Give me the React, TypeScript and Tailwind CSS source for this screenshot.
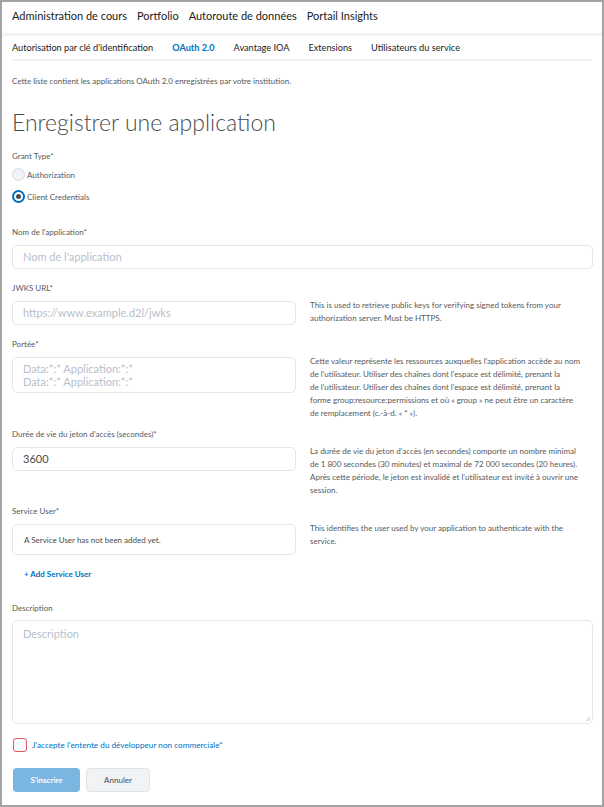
import React from 'react';

const font = { fontFamily: 'Lato, "Open Sans", sans-serif' };

const Label: React.FC<{ children: React.ReactNode; className?: string }> = ({ children, className = '' }) => (
  <div className={`text-[8px] leading-[12px] text-[#565a5c] ${className}`}>{children}</div>
);

// help text beside a field, one entry per rendered line
const Help: React.FC<{ lines: string[] }> = ({ lines }) => (
  <div className="-mt-[2px] whitespace-nowrap text-[8px] leading-[13px] text-[#565a5c]">
    {lines.map((l, i) => (
      <div key={i}>{l}</div>
    ))}
  </div>
);

const inputBox = 'rounded-[5px] border border-[#dfe6ef] bg-white';

export default function App() {
  const tabs = ["Autorisation par clé d'identification", 'OAuth 2.0', 'Avantage IOA', 'Extensions', 'Utilisateurs du service'];

  return (
    <div style={font} className="box-border h-[807px] w-[604px] overflow-hidden border-2 border-[#a3a3a3] bg-white">
      {/* top navigation */}
      <div className="flex h-[31px] items-center gap-[10px] pb-[3px] pl-[10px] text-[11px] text-[#202122]">
        <span>Administration de cours</span>
        <span>Portfolio</span>
        <span>Autoroute de données</span>
        <span>Portail Insights</span>
      </div>
      <div className="h-[3px] bg-[#f3f4f6]" />

      <div className="px-[10px]">
        {/* sub tabs */}
        <div className="flex h-[25px] items-center gap-[19px] border-b-2 border-[#eef1f5] text-[9.2px] text-[#202122]">
          {tabs.map((t) => (
            <span key={t} className={t === 'OAuth 2.0' ? 'font-bold text-[#006fbf]' : ''}>
              {t}
            </span>
          ))}
        </div>

        <p className="mt-[14px] text-[8px] leading-[12px] text-[#565a5c]">
          Cette liste contient les applications OAuth 2.0 enregistrées par votre institution.
        </p>

        <h1 className="mt-[21px] text-[23px] font-light leading-[28px] text-[#494c4e]">Enregistrer une application</h1>

        {/* grant type */}
        <Label className="mt-[14px]">Grant Type*</Label>
        <div className="mt-[6px] flex h-[13px] items-center gap-[2px]">
          <span className="h-[13px] w-[13px] rounded-full border border-[#d3d9e3] bg-[#f1f3f6]" />
          <span className="text-[8px] leading-[12px] text-[#565a5c]">Authorization</span>
        </div>
        <div className="mt-[9px] flex h-[13px] items-center gap-[2px]">
          <span className="flex h-[13px] w-[13px] items-center justify-center rounded-full border-2 border-[#006fbf] bg-white">
            <span className="h-[5px] w-[5px] rounded-full bg-[#494c4e]" />
          </span>
          <span className="text-[8px] leading-[12px] text-[#565a5c]">Client Credentials</span>
        </div>

        {/* name */}
        <Label className="mt-[23px]">Nom de l'application*</Label>
        <div className={`mt-[7px] flex h-[24px] w-[581px] items-center px-[10px] text-[11px] text-[#b8c0ca] ${inputBox}`}>
          Nom de l'application
        </div>

        {/* jwks */}
        <Label className="mt-[13px]">JWKS URL*</Label>
        <div className="mt-[7px] flex items-start gap-[14px]">
          <div className={`flex h-[24px] w-[284px] shrink-0 items-center px-[10px] text-[11px] text-[#b8c0ca] ${inputBox}`}>
            https://www.example.d2l/jwks
          </div>
          <Help
            lines={[
              'This is used to retrieve public keys for verifying signed tokens from your',
              'authorization server. Must be HTTPS.',
            ]}
          />
        </div>

        {/* scope */}
        <Label className="mt-[13px]">Portée*</Label>
        <div className="mt-[7px] flex items-start gap-[14px]">
          <div className={`flex h-[36px] w-[284px] shrink-0 flex-col justify-center px-[10px] text-[11px] leading-[13px] text-[#b8c0ca] ${inputBox}`}>
            <span>Data:*:* Application:*:*</span>
            <span>Data:*:* Application:*:*</span>
          </div>
          <Help
            lines={[
              "Cette valeur représente les ressources auxquelles l'application accède au nom",
              "de l'utilisateur. Utiliser des chaînes dont l'espace est délimité, prenant la",
              "de l'utilisateur. Utiliser des chaînes dont l'espace est délimité, prenant la",
              'forme group:resource:permissions et où « group » ne peut être un caractère',
              'de remplacement (c.-à-d. « * »).',
            ]}
          />
        </div>

        {/* token lifetime */}
        <Label className="mt-[8px]">Durée de vie du jeton d'accès (secondes)*</Label>
        <div className="mt-[7px] flex items-start gap-[14px]">
          <div className={`flex h-[24px] w-[284px] shrink-0 items-center px-[10px] text-[11px] text-[#494c4e] ${inputBox}`}>
            3600
          </div>
          <Help
            lines={[
              "La durée de vie du jeton d'accès (en secondes) comporte un nombre minimal",
              'de 1 800 secondes (30 minutes) et maximal de 72 000 secondes (20 heures).',
              "Après cette période, le jeton est invalidé et l'utilisateur est invité à ouvrir une",
              'session.',
            ]}
          />
        </div>

        {/* service user */}
        <Label className="mt-[8px]">Service User*</Label>
        <div className="mt-[7px] flex items-start gap-[14px]">
          <div className={`flex h-[31px] w-[284px] shrink-0 items-center px-[11px] text-[8px] text-[#494c4e] ${inputBox}`}>
            A Service User has not been added yet.
          </div>
          <Help lines={['This identifies the user used by your application to authenticate with the', 'service.']} />
        </div>
        <div className="mt-[13px] pl-[12px] text-[8px] font-bold leading-[12px] text-[#006fbf]">+ Add Service User</div>

        {/* description */}
        <Label className="mt-[22px]">Description</Label>
        <div className={`relative mt-[6px] h-[104px] w-[581px] px-[10px] pt-[5px] text-[11px] leading-[16px] text-[#b8c0ca] ${inputBox}`}>
          Description
          <svg className="absolute bottom-[2px] right-[2px]" width="5" height="5" viewBox="0 0 5 5">
            <path d="M1 5 L5 1 M3 5 L5 3" stroke="#9aa0a6" strokeWidth="0.6" />
          </svg>
        </div>

        {/* agreement */}
        <div className="mt-[14px] flex h-[14px] items-center gap-[5px] pl-[1px]">
          <span className="h-[14px] w-[14px] rounded-[3px] border border-[#e0585e] bg-[#f8f9fb]" />
          <span className="text-[8.2px] leading-[12px] text-[#006fbf]">J'accepte l'entente du développeur non commerciale*</span>
        </div>

        {/* buttons */}
        <div className="mt-[16px] flex gap-[6px] pl-[1px]">
          <button className="h-[24px] w-[67px] rounded-[4px] bg-[#7ab6e0] text-[8px] font-bold text-white">S'inscrire</button>
          <button className="h-[24px] w-[64px] rounded-[4px] border border-[#dfe3e9] bg-[#f1f3f5] text-[8px] text-[#494c4e]">Annuler</button>
        </div>
      </div>
    </div>
  );
}
